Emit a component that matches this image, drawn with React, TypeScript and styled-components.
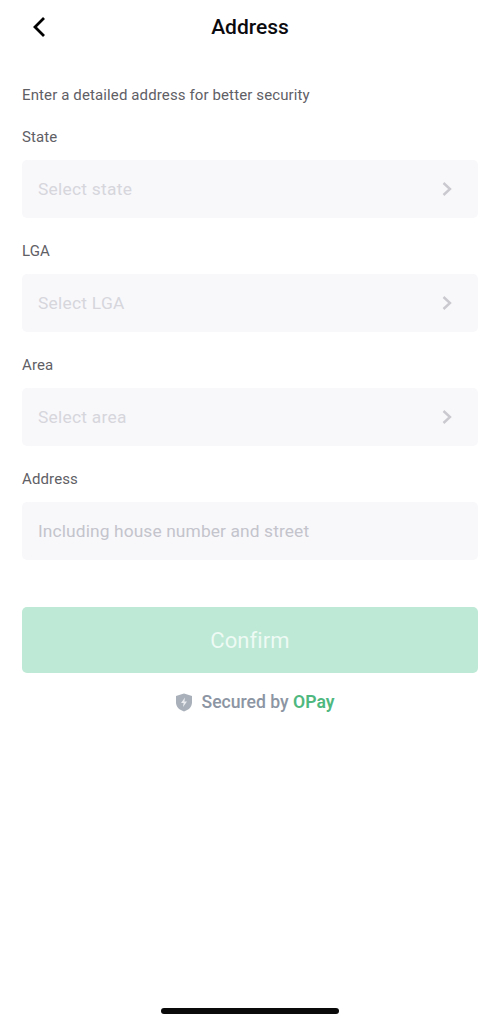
import styled, { createGlobalStyle } from 'styled-components';

const GlobalStyle = createGlobalStyle`
  html, body {
    margin: 0;
    padding: 0;
    background: #fff;
  }
`;

const Screen = styled.div`
  display: flex;
  flex-direction: column;
  width: 500px;
  height: 1024px;
  font-family: Roboto, 'Noto Sans', sans-serif;
  overflow: hidden;
`;

const Header = styled.header`
  display: grid;
  grid-template-columns: 78px 1fr 78px;
  align-items: center;
  height: 54px;
`;

const BackButton = styled.button`
  display: flex;
  align-items: center;
  justify-content: center;
  height: 54px;
  padding: 0;
  border: none;
  background: none;
`;

const Title = styled.h1`
  margin: 0;
  font-size: 21px;
  font-weight: 500;
  line-height: 54px;
  text-align: center;
  color: #0b0b0f;
`;

const Form = styled.main`
  display: flex;
  flex-direction: column;
  flex: 1;
  padding: 31px 22px 0;
`;

const Intro = styled.p`
  margin: 0 0 23px;
  font-size: 15px;
  line-height: 20px;
  letter-spacing: 0.12px;
  color: #5f6066;
`;

const Fields = styled.div`
  display: flex;
  flex-direction: column;
  gap: 24px;
`;

const Field = styled.div`
  display: flex;
  flex-direction: column;
  gap: 13px;
`;

const Label = styled.label`
  font-size: 15px;
  line-height: 19px;
  letter-spacing: 0.12px;
  color: #5f6066;
`;

const InputBox = styled.div`
  display: flex;
  align-items: center;
  justify-content: space-between;
  height: 58px;
  padding: 0 25px 0 16px;
  border-radius: 5px;
  background: #f8f8fb;
`;

const Placeholder = styled.span<{ $dim?: boolean }>`
  font-size: 17.4px;
  letter-spacing: ${({ $dim }) => ($dim ? '0.25px' : '0.1px')};
  color: ${({ $dim }) => ($dim ? '#d6d6dc' : '#c4c4cc')};
`;

const ConfirmButton = styled.button`
  height: 66px;
  margin-top: 47px;
  padding: 0;
  border: none;
  border-radius: 5px;
  background: #bde9d6;
  font-family: inherit;
  font-size: 22px;
  letter-spacing: 0.1px;
  color: #eefaf4;
`;

const Secured = styled.div`
  display: flex;
  align-items: center;
  justify-content: center;
  gap: 9px;
  margin-top: 18px;
  padding-left: 9px;
  height: 22px;
  font-size: 17.6px;
  font-weight: 500;
  color: #8c95a3;
`;

const Brand = styled.span`
  font-weight: 600;
  color: #4fb87f;
`;

const HomeBar = styled.div`
  align-self: center;
  width: 178px;
  height: 6px;
  margin-bottom: 10px;
  border-radius: 3px;
  background: #0a0a0a;
`;

const Chevron = () => (
  <svg width="12" height="16" viewBox="0 0 12 16" fill="none">
    <path d="M2.5 2 L9 8 L2.5 14" stroke="#c9c9cf" strokeWidth="2.4" />
  </svg>
);

const BackIcon = () => (
  <svg width="16" height="22" viewBox="0 0 16 22" fill="none">
    <path d="M13 2 L4 11 L13 20" stroke="#000" strokeWidth="2.8" />
  </svg>
);

const ShieldIcon = () => (
  <svg width="18" height="19" viewBox="0 0 18 19">
    <path
      d="M9 .5 L17 3 V9.5 C17 14 13.5 17 9 18.5 C4.5 17 1 14 1 9.5 V3 Z"
      fill="#a9b0ba"
    />
    <path d="M10 4.5 L6 10 H8.6 L8 14 L12 8.6 H9.4 Z" fill="#e9ebee" />
  </svg>
);

const selects = [
  { label: 'State', placeholder: 'Select state' },
  { label: 'LGA', placeholder: 'Select LGA' },
  { label: 'Area', placeholder: 'Select area' },
];

const App = () => {
  return (
    <Screen>
      <GlobalStyle />
      <Header>
        <BackButton aria-label="Back">
          <BackIcon />
        </BackButton>
        <Title>Address</Title>
      </Header>
      <Form>
        <Intro>Enter a detailed address for better security</Intro>
        <Fields>
          {selects.map((item) => (
            <Field key={item.label}>
              <Label>{item.label}</Label>
              <InputBox>
                <Placeholder $dim>{item.placeholder}</Placeholder>
                <Chevron />
              </InputBox>
            </Field>
          ))}
          <Field>
            <Label>Address</Label>
            <InputBox>
              <Placeholder>Including house number and street</Placeholder>
            </InputBox>
          </Field>
        </Fields>
        <ConfirmButton>Confirm</ConfirmButton>
        <Secured>
          <ShieldIcon />
          <span>
            Secured by <Brand>OPay</Brand>
          </span>
        </Secured>
      </Form>
      <HomeBar />
    </Screen>
  );
};

export default App;
